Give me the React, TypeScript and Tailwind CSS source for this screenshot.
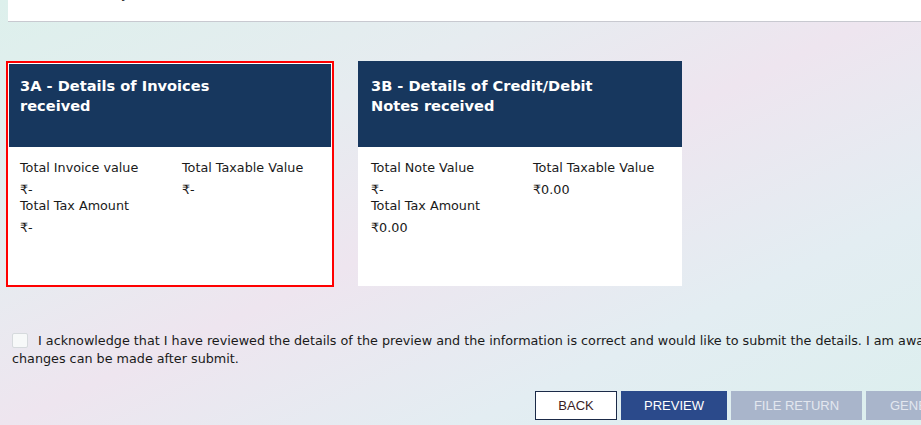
const cards = [
  {
    id: "3A",
    title: "3A - Details of Invoices received",
    selected: true,
    left: [
      { label: "Total Invoice value", value: "₹-" },
      { label: "Total Tax Amount", value: "₹-" },
    ],
    right: { label: "Total Taxable Value", value: "₹-" },
  },
  {
    id: "3B",
    title: "3B - Details of Credit/Debit Notes received",
    selected: false,
    left: [
      { label: "Total Note Value", value: "₹-" },
      { label: "Total Tax Amount", value: "₹0.00" },
    ],
    right: { label: "Total Taxable Value", value: "₹0.00" },
  },
];

type Card = (typeof cards)[number];

const Field = ({ label, value, first }: { label: string; value: string; first?: boolean }) => (
  <div className={first ? "" : "-mt-px"}>
    <div className="leading-[18px]">{label}</div>
    <div className="mt-[4px] h-[17px] leading-[18px]">{value}</div>
  </div>
);

const SummaryCard = ({ card }: { card: Card }) => (
  <div
    className={
      card.selected
        ? "w-[328px] h-[226px] border-2 border-[#ff0000] p-px bg-white flex flex-col"
        : "w-[324px] h-[225px] bg-white flex flex-col"
    }
  >
    <div
      className={
        card.selected
          ? "h-[83px] bg-[#17375e] pl-[11px] pt-[12px]"
          : "h-[86px] bg-[#17375e] pl-[13px] pt-[15px]"
      }
    >
      <h3 className="w-[235px] text-white font-bold text-[14.6px] leading-[20px]">{card.title}</h3>
    </div>
    <div
      className={
        card.selected
          ? "grid grid-cols-[162px_1fr] pl-[11px] pt-[12px] text-[12.75px] text-[#1a1a1a]"
          : "grid grid-cols-[162px_1fr] pl-[13px] pt-[12px] text-[12.75px] text-[#1a1a1a]"
      }
    >
      <div>
        {card.left.map((f, i) => (
          <Field key={f.label} label={f.label} value={f.value} first={i === 0} />
        ))}
      </div>
      <div>
        <Field label={card.right.label} value={card.right.value} first />
      </div>
    </div>
  </div>
);

export default function App() {
  return (
    <div className="w-[921px] h-[425px] overflow-hidden font-['DejaVu_Sans',sans-serif] bg-[linear-gradient(155deg,#ddf0ec_0%,#e6ecf0_30%,#eee5ef_50%,#e3edf2_75%,#dcefee_100%)]">
      {/* return period strip, mostly scrolled off */}
      <div className="ml-[8px] h-[22px] bg-white border-b border-[#c8c9d0] overflow-hidden pl-[14px]">
        <p className="-mt-[13px] text-[13px] leading-[14px] text-[#1d1d1d]">Return Period - Jun-19</p>
      </div>

      <div className="flex gap-[24px] pl-[6px] pt-[39px]">
        {cards.map((c) => (
          <SummaryCard key={c.id} card={c} />
        ))}
      </div>

      <div className="mt-[45px] pl-[12px] text-[12.75px] leading-[18px] text-[#1a1a1a]">
        <div className="whitespace-nowrap">
          <span className="inline-block align-[-3px] w-[16px] h-[15px] mr-[10px] border border-[#d6dadd] bg-[#f7f9f9] rounded-[2px]" />
          I acknowledge that I have reviewed the details of the preview and the information is correct and would like to submit the details. I am aware that no
        </div>
        <div>changes can be made after submit.</div>
      </div>

      <div className="flex gap-[4px] pl-[535px] pt-[23px] font-['Liberation_Sans',sans-serif] text-[13px] whitespace-nowrap">
        <button className="w-[82px] h-[29px] shrink-0 bg-white border border-[#1b2a48] text-[#3a1c1f]">BACK</button>
        <button className="w-[106px] h-[29px] shrink-0 bg-[#2b4a8b] text-white">PREVIEW</button>
        <button className="w-[131px] h-[29px] shrink-0 bg-[#a9b5cb] text-[#e3e7ef]">FILE RETURN</button>
        <button className="w-[190px] h-[29px] shrink-0 bg-[#a9b5cb] text-[#e3e7ef] text-left pl-[24px]">GENERATE SUMMARY</button>
      </div>
    </div>
  );
}
